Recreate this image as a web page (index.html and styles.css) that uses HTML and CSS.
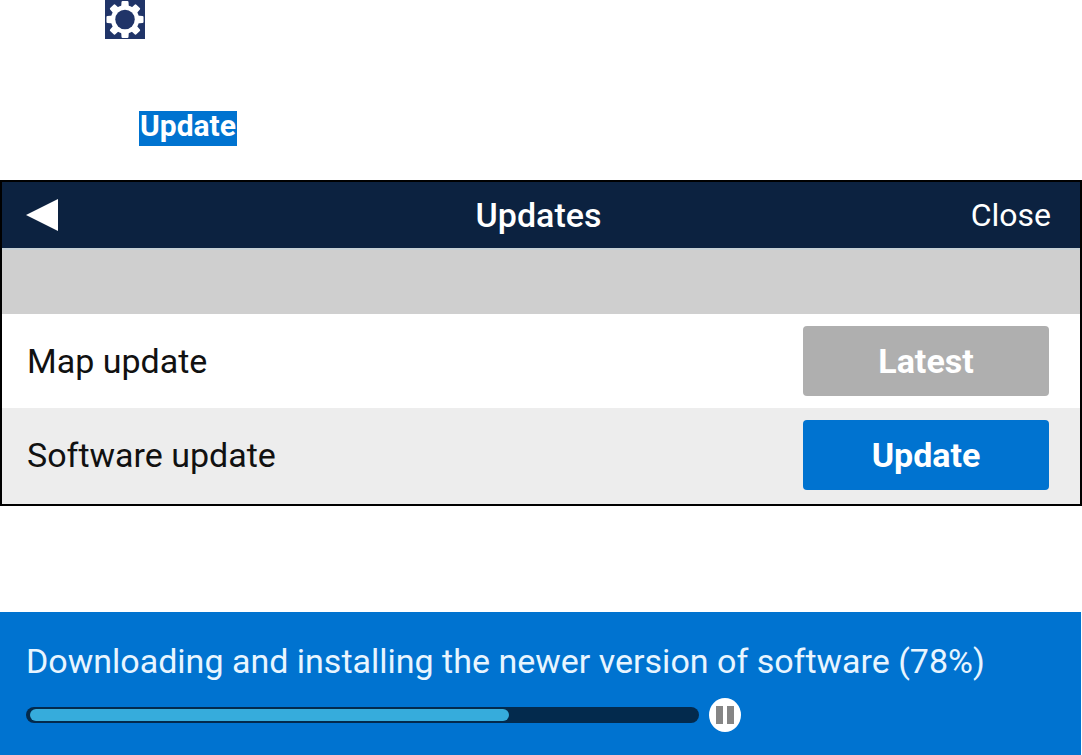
FILE: index.html
```html
<!DOCTYPE html>
<html lang="en">
<head>
    <meta charset="UTF-8">
    <meta name="viewport" content="width=device-width, initial-scale=1.0">
    <title>Updates</title>
    <link rel="stylesheet" href="styles.css">
</head>
<body>
    <div class="shortcuts">
        <button class="settings-btn" aria-label="Settings">
            <svg class="gear" viewBox="0 0 40 40">
                <path d="M16 8 L16.4 2 Q16.5 1 17.5 1 L22.5 1 Q23.5 1 23.6 2 L24 8 Z"/>
                <path d="M16 8 L16.4 2 Q16.5 1 17.5 1 L22.5 1 Q23.5 1 23.6 2 L24 8 Z" transform="rotate(45 20 20)"/>
                <path d="M16 8 L16.4 2 Q16.5 1 17.5 1 L22.5 1 Q23.5 1 23.6 2 L24 8 Z" transform="rotate(90 20 20)"/>
                <path d="M16 8 L16.4 2 Q16.5 1 17.5 1 L22.5 1 Q23.5 1 23.6 2 L24 8 Z" transform="rotate(135 20 20)"/>
                <path d="M16 8 L16.4 2 Q16.5 1 17.5 1 L22.5 1 Q23.5 1 23.6 2 L24 8 Z" transform="rotate(180 20 20)"/>
                <path d="M16 8 L16.4 2 Q16.5 1 17.5 1 L22.5 1 Q23.5 1 23.6 2 L24 8 Z" transform="rotate(225 20 20)"/>
                <path d="M16 8 L16.4 2 Q16.5 1 17.5 1 L22.5 1 Q23.5 1 23.6 2 L24 8 Z" transform="rotate(270 20 20)"/>
                <path d="M16 8 L16.4 2 Q16.5 1 17.5 1 L22.5 1 Q23.5 1 23.6 2 L24 8 Z" transform="rotate(315 20 20)"/>
                <circle cx="20" cy="20" r="14.5"/>
                <circle class="gear-hole" cx="20" cy="20" r="10"/>
            </svg>
        </button>
        <button class="tag-btn">Update</button>
    </div>

    <div class="panel">
        <div class="panel-header">
            <button class="back-btn" aria-label="Back">
                <svg width="32" height="32" viewBox="0 0 32 32"><path d="M0 16 L32 0 V32 Z" fill="#fff"/></svg>
            </button>
            <h2 class="panel-title">Updates</h2>
            <button class="close-btn">Close</button>
        </div>
        <div class="strip"></div>
        <div class="row">
            <span class="row-name">Map update</span>
            <button class="action-btn latest" disabled>Latest</button>
        </div>
        <div class="row shaded">
            <span class="row-name">Software update</span>
            <button class="action-btn">Update</button>
        </div>
    </div>

    <div class="download">
        <p class="download-msg" id="download-msg">Downloading and installing the newer version of software (78%)</p>
        <div class="download-bar">
            <div class="track" role="progressbar" aria-labelledby="download-msg" aria-valuenow="78" aria-valuemin="0" aria-valuemax="100">
                <div class="fill" style="width: 72%"></div>
            </div>
            <button class="pause-btn" aria-label="Pause">
                <svg width="18" height="18" viewBox="0 0 18 18"><path d="M0 0H7V18H0ZM11 0H18V18H11Z" fill="#858585"/></svg>
            </button>
        </div>
    </div>
</body>
</html>
```
FILE: styles.css
```css
*{
    margin: 0;
    padding: 0;
    box-sizing: border-box;
}
body{
    background-color: #fff;
    color: #111;
    font-family: Roboto, "Liberation Sans", sans-serif;
    font-size: 34px;
    line-height: 40px;
}
button{
    border: none;
    background: none;
    color: #fff;
    font: inherit;
}
svg{
    display: block;
}
.shortcuts{
    display: flex;
    flex-direction: column;
    align-items: flex-start;
    gap: 72px;
    margin-bottom: 34px;
}
.settings-btn{
    margin-left: 105px;
    background-color: #203468;
}
.gear{
    width: 40px;
    height: 39px;
    fill: #fff;
}
.gear-hole{
    fill: #203468;
}
.tag-btn{
    margin-left: 139px;
    padding: 0 1px 5px;
    background-color: #0073d0;
    font-size: 30px;
    font-weight: 700;
    line-height: 30px;
}
.panel{
    border: 2px solid #000;
}
.panel-header{
    display: grid;
    grid-template-columns: 1fr auto 1fr;
    align-items: center;
    padding: 0 29px 0 24px;
    height: 66px;
    background-color: #0c2240;
    color: #fff;
}
.back-btn{
    justify-self: start;
}
.panel-title{
    font-size: 34px;
    font-weight: 500;
}
.close-btn{
    justify-self: end;
    font-size: 32px;
}
.strip{
    height: 66px;
    border-top: 2px solid #c6d1d6;
    background-color: #cfcfcf;
}
.row{
    display: flex;
    justify-content: space-between;
    align-items: center;
    padding: 12px 31px 12px 25px;
}
.shaded{
    padding-bottom: 14px;
    background-color: #ededed;
}
.action-btn{
    width: 246px;
    height: 70px;
    border-radius: 4px;
    background-color: #0073d0;
    font-weight: 700;
}
.latest{
    background-color: #afafaf;
}
.download{
    margin-top: 106px;
    margin-right: 1px;
    padding: 29px 26px 23px;
    background-color: #0073d0;
    color: #e8f5ff;
}
.download-bar{
    display: flex;
    align-items: center;
    gap: 10px;
    margin-top: 17px;
}
.track{
    width: 65.4%;
    height: 16px;
    padding: 2px 4px;
    border-radius: 8px;
    background-color: #032a4d;
}
.fill{
    height: 12px;
    border-radius: 6px;
    background-color: #36acdc;
}
.pause-btn{
    display: flex;
    align-items: center;
    justify-content: center;
    width: 32px;
    height: 34px;
    border-radius: 50%;
    background-color: #fff;
}
```
